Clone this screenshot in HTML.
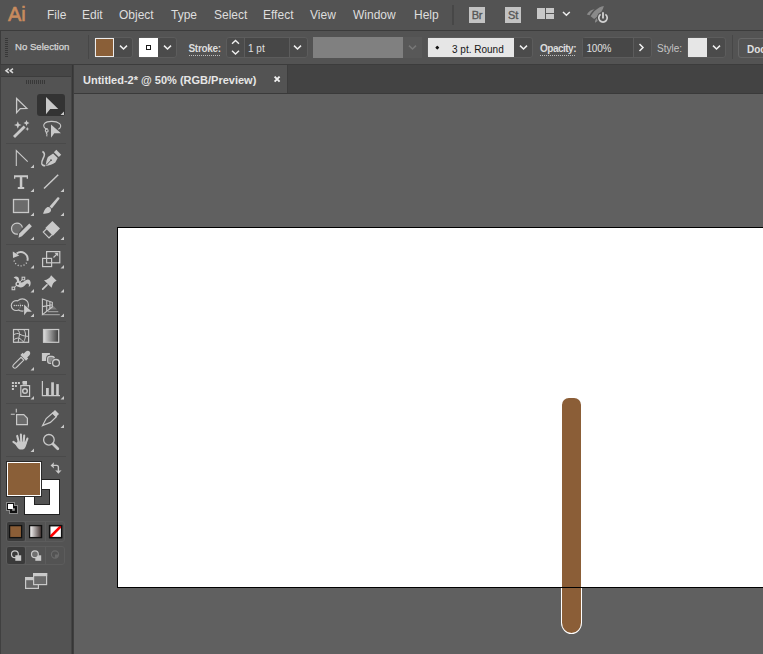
<!DOCTYPE html>
<html><head><meta charset="utf-8">
<style>
*{margin:0;padding:0;box-sizing:border-box}
html,body{width:763px;height:654px;overflow:hidden;background:#535353;font-family:"Liberation Sans",sans-serif}
.a{position:absolute}
.mt{position:absolute;top:8px;font-size:12px;color:#dedede;line-height:14px;white-space:nowrap}
.ct{position:absolute;font-size:10px;color:#e0e0e0;line-height:13px;white-space:nowrap}
.b{font-weight:bold}
.bx{position:absolute;background:#4b4b4b;border:1px solid #5c5c5c;border-radius:3px}
svg{position:absolute;overflow:visible}
</style></head><body>
<!-- menu bar -->
<div class="a" style="left:0;top:0;width:763px;height:30px;background:#535353"></div>
<div class="a" style="left:8px;top:2px;font-size:20px;color:#c98b5e;line-height:24px;-webkit-text-stroke:0.6px #c98b5e;transform:scaleX(1);transform-origin:0 0">Ai</div>
<div class="mt" style="left:47px">File</div>
<div class="mt" style="left:82px">Edit</div>
<div class="mt" style="left:119px">Object</div>
<div class="mt" style="left:171px">Type</div>
<div class="mt" style="left:214px">Select</div>
<div class="mt" style="left:263px">Effect</div>
<div class="mt" style="left:310px">View</div>
<div class="mt" style="left:353px">Window</div>
<div class="mt" style="left:414px">Help</div>
<div class="a" style="left:452px;top:5px;width:2px;height:20px;background:#474747"></div>
<div class="a" style="left:469px;top:7px;width:16px;height:16px;background:#c3c3c3;color:#565656;font-size:11px;line-height:16px;text-align:center;-webkit-text-stroke:0.35px #565656;letter-spacing:-0.3px">Br</div>
<div class="a" style="left:505px;top:7px;width:16px;height:16px;background:#c3c3c3;color:#565656;font-size:11px;line-height:16px;text-align:center;-webkit-text-stroke:0.35px #565656;letter-spacing:-0.3px">St</div>

<svg style="left:530px;top:0" width="90" height="30" viewBox="530 0 90 30">
<rect x="537" y="8" width="8" height="11" fill="#c8c8c8"/>
<rect x="546" y="8" width="8" height="5" fill="#c8c8c8"/>
<rect x="546" y="14" width="8" height="5" fill="#c8c8c8"/>
<path d="M563 12 L566.4 15.3 L569.8 12" fill="none" stroke="#ececec" stroke-width="1.5"/>
<path d="M603.8 5.9 C598 7 593.5 11 590.6 16.3 L594.1 18.9 C599 15.5 602.6 11 603.8 5.9Z" fill="#8a8a8a"/>
<path d="M586.8 14.6 C588.5 11.5 591.5 9.5 594.6 9.3 C592.5 11 590.8 13 589.6 15.2Z" fill="#8a8a8a"/>
<path d="M595 22.7 C594.8 21 595.5 19 597 18 L598.4 20.6Z" fill="#8a8a8a"/>
<circle cx="603" cy="17.9" r="6.1" fill="#535353"/>
<path d="M600.6 14.4 A4.2 4.2 0 1 0 605.4 14.4" fill="none" stroke="#d2d2d2" stroke-width="1.7"/>
<path d="M603 12 V18.6" stroke="#535353" stroke-width="3.4"/><path d="M603 12.2 V18.4" stroke="#d2d2d2" stroke-width="1.8"/>
</svg>

<!-- control bar -->
<div class="a" style="left:0;top:30px;width:763px;height:35px;background:#3c3c3c"></div>
<div class="a" style="left:1px;top:31px;width:762px;height:33px;background:#535353"></div>

<!-- grip -->
<div class="a" style="left:5px;top:38px;width:3px;height:19px;background:repeating-linear-gradient(#383838 0 1px,transparent 1px 2px)"></div>
<div class="ct" style="left:15px;top:40px;font-size:9.6px;color:#d6d6d6;letter-spacing:0px;-webkit-text-stroke:0.25px #d6d6d6">No Selection</div>
<div class="a" style="left:88px;top:35px;width:1px;height:24px;background:#474747"></div>
<!-- fill -->
<div class="bx" style="left:94px;top:37px;width:39px;height:21px"></div>
<div class="a" style="left:95px;top:38px;width:19px;height:19px;background:#ececec"></div>
<div class="a" style="left:96px;top:39px;width:17px;height:17px;background:#8a5f38"></div>
<svg style="left:119px;top:45px" width="10" height="7"><path d="M1 0.6 L4.5 4 L8 0.6" fill="none" stroke="#f0f0f0" stroke-width="1.5"/></svg>
<!-- stroke -->
<div class="bx" style="left:138px;top:37px;width:39px;height:21px"></div>
<div class="a" style="left:139px;top:38px;width:19px;height:19px;background:#fff"></div>
<div class="a" style="left:146px;top:45px;width:5px;height:5px;border:1px solid #1a1a1a"></div>
<svg style="left:163px;top:45px" width="10" height="7"><path d="M1 0.6 L4.5 4 L8 0.6" fill="none" stroke="#f0f0f0" stroke-width="1.5"/></svg>
<div class="ct b" style="left:188.5px;top:42px;color:#dcdcdc;letter-spacing:-0.3px">Stroke:</div>
<div class="a" style="left:189px;top:55px;width:31px;height:1px;background:repeating-linear-gradient(90deg,#bdbdbd 0 1px,transparent 1px 2px)"></div>
<!-- spinner -->
<div class="bx" style="left:226px;top:37px;width:82px;height:21px"></div>
<div class="a" style="left:244px;top:38px;width:1px;height:19px;background:#5c5c5c"></div>
<div class="a" style="left:245px;top:38px;width:44px;height:19px;background:#474747"></div>
<div class="a" style="left:289px;top:38px;width:1px;height:19px;background:#5c5c5c"></div>
<svg style="left:230px;top:39px" width="12" height="18"><path d="M2 4.8 L5.5 1.5 L9 4.8 M2 11.8 L5.5 15.1 L9 11.8" fill="none" stroke="#f0f0f0" stroke-width="1.4"/></svg>
<div class="ct" style="left:248px;top:42px">1 pt</div>
<svg style="left:293px;top:45px" width="10" height="7"><path d="M1 0.6 L4.5 4 L8 0.6" fill="none" stroke="#f0f0f0" stroke-width="1.5"/></svg>
<!-- profile -->
<div class="a" style="left:313px;top:37px;width:90px;height:21px;background:#808080"></div>
<div class="a" style="left:403px;top:37px;width:19px;height:21px;background:#585858"></div>
<svg style="left:408px;top:45px" width="10" height="7"><path d="M1 0.6 L4.5 4 L8 0.6" fill="none" stroke="#777" stroke-width="1.5"/></svg>
<!-- brush -->
<div class="bx" style="left:427px;top:37px;width:106px;height:21px"></div>
<div class="a" style="left:428px;top:38px;width:86px;height:19px;background:#e6e6e6"></div>
<div class="a" style="left:436px;top:46.3px;width:2.6px;height:2.6px;background:#111;border-radius:0.6px;transform:rotate(45deg)"></div>
<div class="ct" style="left:452px;top:43px;color:#151515">3 pt. Round</div>
<svg style="left:519px;top:45px" width="10" height="7"><path d="M1 0.6 L4.5 4 L8 0.6" fill="none" stroke="#f0f0f0" stroke-width="1.5"/></svg>
<div class="ct b" style="left:540px;top:42px;color:#dcdcdc;letter-spacing:-0.5px">Opacity:</div>
<div class="a" style="left:540px;top:55px;width:36px;height:1px;background:repeating-linear-gradient(90deg,#bdbdbd 0 1px,transparent 1px 2px)"></div>
<!-- opacity -->
<div class="bx" style="left:582px;top:37px;width:70px;height:21px"></div>
<div class="a" style="left:583px;top:38px;width:50px;height:19px;background:#474747"></div>
<div class="a" style="left:633px;top:38px;width:1px;height:19px;background:#5c5c5c"></div>
<div class="ct" style="left:586.5px;top:42px;letter-spacing:-0.2px">100%</div>
<svg style="left:638px;top:43px" width="8" height="10"><path d="M1.5 1 L5 4.5 L1.5 8" fill="none" stroke="#f0f0f0" stroke-width="1.5"/></svg>
<div class="ct" style="left:657px;top:42px;color:#c4c4c4">Style:</div>
<div class="bx" style="left:687px;top:37px;width:39px;height:21px"></div>
<div class="a" style="left:688px;top:38px;width:19px;height:19px;background:#e6e6e6"></div>
<svg style="left:712px;top:45px" width="10" height="7"><path d="M1 0.6 L4.5 4 L8 0.6" fill="none" stroke="#f0f0f0" stroke-width="1.5"/></svg>
<div class="a" style="left:732px;top:35px;width:1px;height:24px;background:#474747"></div>
<div class="bx" style="left:738px;top:38px;width:40px;height:20px;background:transparent;border-color:#666;border-radius:3px"></div>
<div class="ct b" style="left:747px;top:43px">Doc</div>

<!-- tab bar -->
<div class="a" style="left:0;top:65px;width:763px;height:29px;background:#434343"></div>
<div class="a" style="left:74px;top:65px;width:213px;height:28px;background:#535353"></div>
<div class="a" style="left:287px;top:65px;width:1px;height:28px;background:#3d3d3d"></div>
<div class="a" style="left:0;top:93px;width:763px;height:1px;background:#3a3a3a"></div>
<div class="ct b" style="left:83px;top:74px;font-size:11px;color:#e6e6e6">Untitled-2* @ 50% (RGB/Preview)</div>
<svg style="left:272px;top:74px" width="10" height="10"><path d="M2.6 2.6 L7.6 7.6 M7.6 2.6 L2.6 7.6" stroke="#f0f0f0" stroke-width="1.9"/></svg>

<!-- canvas -->
<div class="a" style="left:74px;top:94px;width:689px;height:560px;background:#606060"></div>
<div class="a" style="left:71px;top:65px;width:3px;height:589px;background:linear-gradient(90deg,#444 0 1px,#363636 1px 2px,#3f3f3f 2px)"></div>
<div class="a" style="left:117px;top:227px;width:660px;height:361px;background:#fff;border:1px solid #000"></div>
<div class="a" style="left:561px;top:397px;width:21px;height:237px;background:#fff;border-radius:8px 8px 10.5px 10.5px / 8px 8px 11.5px 11.5px"></div>
<div class="a" style="left:561.8px;top:397.8px;width:19.4px;height:235.4px;background:#8b5e37;border-radius:7px 7px 9.7px 9.7px / 7px 7px 10.7px 10.7px"></div>
<div class="a" style="left:117px;top:587px;width:646px;height:1px;background:#000"></div>

<!-- toolbar -->
<div class="a" style="left:0;top:65px;width:71px;height:11px;background:#464646"></div>
<div class="a" style="left:0;top:76px;width:71px;height:1px;background:#3c3c3c"></div>
<div class="a" style="left:0;top:77px;width:71px;height:577px;background:#535353"></div>
<div class="a" style="left:0;top:65px;width:1px;height:589px;background:#404040"></div>

<svg style="left:0;top:0" width="72" height="654" viewBox="0 0 72 654">
<g fill="none" stroke="#474747" stroke-width="1">
<!-- header chevrons -->
</g>
<path d="M8.8 68.6 L6 70.7 L8.8 72.8 M13 68.6 L10.2 70.7 L13 72.8" fill="none" stroke="#d8d8d8" stroke-width="1.5"/>
<!-- grip -->
<g fill="#383838"><rect x="26" y="80" width="1" height="4"/><rect x="28" y="80" width="1" height="4"/><rect x="30" y="80" width="1" height="4"/><rect x="32" y="80" width="1" height="4"/><rect x="34" y="80" width="1" height="4"/><rect x="36" y="80" width="1" height="4"/><rect x="38" y="80" width="1" height="4"/><rect x="40" y="80" width="1" height="4"/><rect x="42" y="80" width="1" height="4"/><rect x="44" y="80" width="1" height="4"/></g>
<!-- separators -->
<g fill="#4a4a4a"><rect x="6" y="143" width="60" height="1"/><rect x="6" y="244" width="60" height="1"/><rect x="6" y="321" width="60" height="1"/><rect x="6" y="374" width="60" height="1"/><rect x="6" y="403" width="60" height="1"/><rect x="6" y="456" width="60" height="1"/></g>
<!-- selected bg -->
<rect x="37" y="94" width="28" height="22" rx="3" fill="#333"/>
<g fill="#c9c9c9">
<!-- small corner triangles -->
<path d="M64 111.5 L64 115 L60.5 115Z"/>
<path d="M34 164.5 L34 168 L30.5 168Z"/>
<path d="M34 188.5 L34 192 L30.5 192Z"/><path d="M64 188.5 L64 192 L60.5 192Z"/>
<path d="M34 212.5 L34 216 L30.5 216Z"/><path d="M64 212.5 L64 216 L60.5 216Z"/>
<path d="M34 236.5 L34 240 L30.5 240Z"/><path d="M64 236.5 L64 240 L60.5 240Z"/>
<path d="M34 265 L34 268.5 L30.5 268.5Z"/><path d="M64 265 L64 268.5 L60.5 268.5Z"/>
<path d="M34 289 L34 292.5 L30.5 292.5Z"/><path d="M64 289 L64 292.5 L60.5 292.5Z"/>
<path d="M34 313.5 L34 317 L30.5 317Z"/><path d="M64 313.5 L64 317 L60.5 317Z"/>
<path d="M34 367 L34 370.5 L30.5 370.5Z"/>
<path d="M34 396 L34 399.5 L30.5 399.5Z"/><path d="M64 396 L64 399.5 L60.5 399.5Z"/>
<path d="M64 424.5 L64 428 L60.5 428Z"/>
<path d="M34 448.5 L34 452 L30.5 452Z"/>
<!-- direct selection filled arrow -->
<path d="M46 97 L58.3 109 L50.2 109 L46 114.3Z"/>
</g>
<g fill="none" stroke="#c9c9c9" stroke-width="1.3" stroke-linejoin="miter">
<!-- selection outline arrow -->
<path d="M16.6 98.5 L26.8 108.3 L20.3 108.6 L16.6 112.6Z"/>
<!-- anchor point -->
<path d="M16.3 166 L16.3 150.6 L27.7 161.7" stroke-width="1.1"/>
<!-- line -->
<path d="M44 188.5 L58.2 174.7" stroke-width="1.5"/>
<!-- rect -->
<rect x="13.5" y="199.5" width="15" height="13" fill="#6b6b6b"/>
</g>
<g fill="#c9c9c9">
<!-- T -->
<path d="M14 175.3 H28 V178.8 H26.7 V177.2 H22.3 V187 H24.2 V189 H17.8 V187 H19.8 V177.2 H15.3 V178.8 H14Z"/>
</g>
</svg>

<svg style="left:0;top:0" width="72" height="654" viewBox="0 0 72 654">
<defs><linearGradient id="gr" x1="0" x2="1" y1="0" y2="0"><stop offset="0" stop-color="#e0e0e0"/><stop offset="1" stop-color="#3a3a3a"/></linearGradient>
<linearGradient id="gr2" x1="0" x2="1" y1="0" y2="0"><stop offset="0" stop-color="#ffffff"/><stop offset="1" stop-color="#111"/></linearGradient></defs>
<g fill="#c9c9c9">
<!-- magic wand stars -->
<path d="M17.8 121.3 L18.9 124 L21.6 125 L18.9 126 L17.8 128.7 L16.7 126 L14 125 L16.7 124Z"/>
<path d="M26.5 120 L27.4 122.1 L29.5 123 L27.4 123.9 L26.5 126 L25.6 123.9 L23.5 123 L25.6 122.1Z"/>
<path d="M27.3 127 L27.9 128.4 L29.3 129 L27.9 129.6 L27.3 131 L26.7 129.6 L25.3 129 L26.7 128.4Z"/>
<!-- lasso arrow -->

<!-- pen nib -->
<path d="M45.6 166 C46 163 46.6 159.6 47.9 157 L53.1 153.4 L57.7 158 L55.3 162.6 C52.6 164.4 49.4 165.6 45.6 166Z"/>
<path d="M53.9 152.2 L56.3 149.8 L61.2 154.7 L58.8 157.1Z"/>
<path d="M45.9 165.6 L50.8 160.5" stroke="#535353" stroke-width="1"/><circle cx="51" cy="160.2" r="0.9" fill="#535353"/>
<!-- paintbrush bristle -->
<path d="M43 213.8 C44 211.5 44.6 208.6 46.8 207.4 C49 206.4 51.4 208 51 210.6 C50.6 212.8 47.6 213.8 43 213.8Z"/><path d="M49.6 206.4 L57.4 197.6 C58.4 196.6 60 197.6 59.3 198.9 L51.8 208.4Z"/>
<!-- shaper pencil -->
<path d="M18.5 237.8 L19.3 233.6 L29.3 223.6 L31.9 226.2 L21.9 236.2Z"/>
<!-- eraser filled -->
<path d="M52.4 221 L60 228.6 L52.9 235.7 L45.3 228.1Z"/>
<!-- rotate arrowhead -->
<path d="M12.8 251.6 L13 258 L19.3 255.6Z"/>
<!-- scale arrowhead -->
<path d="M58.2 252.8 L58.2 256.6 L54.4 252.8Z"/>
<!-- puppet warp blob -->
<path d="M13.6 277.8 C15.6 275.4 18.8 276.2 19 279.2 C19.2 281 20 282.6 22 282.4 C24.4 282.2 25.6 279.4 28 279.6 C30.4 279.8 31.2 282.6 30.4 285 C30 286.2 29.2 286.8 28.6 287 C29.2 285.4 29.2 283.6 27.6 283.4 C26 283.2 25 285.4 23.6 286.4 C21.8 287.8 19 287.6 17.8 286.6 C16.6 285.6 16.8 283.6 17 282 C17.2 280.2 16.6 278.6 13.6 277.8Z"/>
<!-- pin -->
<path d="M51.1 275.2 L56.6 280.7 Q52.4 282.4 51.6 287.8 L44 280.3 Q49.4 279.4 51.1 275.2Z"/>
<path d="M42.7 289.1 L47 284.8" stroke="#c9c9c9" stroke-width="1.7" stroke-linecap="round"/>
<!-- shape builder arrow -->


<!-- graph bars -->
<rect x="46" y="388" width="2.8" height="7.5"/><rect x="51.2" y="382.3" width="2.7" height="13.2"/><rect x="56.2" y="384.1" width="2.6" height="11.4"/>
<!-- symbol sprayer dots -->
<rect x="11.9" y="382" width="2" height="2"/><rect x="14.9" y="382" width="2" height="2"/><rect x="17.9" y="382" width="2" height="2"/><rect x="11.9" y="385" width="2" height="2"/><rect x="14.9" y="385" width="2" height="2"/><rect x="11.9" y="388" width="2" height="2"/>
<path d="M22.6 384.8 V382.6 L21.8 382.2 L23 381 H27 V384.8Z"/>
<!-- pencil -->
<path d="M42.6 425.6 L46.2 418.6 L52.6 413 L56.4 416.8 L50.4 422.4Z" fill="none" stroke="#c9c9c9" stroke-width="1.2"/>
<path d="M52 413 L55 410 L59 414 L56 417Z"/>
<!-- hand -->
<path d="M17.4 441.6 L26.6 441.8 C26.6 445.2 25.4 449.4 22.6 449.4 L19.8 449.4 C18 449.4 16.6 446.4 15.4 444.6Z"/>
<g stroke="#c9c9c9" stroke-width="2.1" stroke-linecap="round"><path d="M13.4 441.9 L18.4 445.4 M17.2 435.9 L18.9 442.5 M20.9 434.6 L21.2 441.5 M24.2 435.6 L23.7 442 M27.4 438.6 L25.4 444"/></g>
</g>
<g fill="none" stroke="#c9c9c9" stroke-width="1.2">
<!-- magic wand bar -->
<path d="M14 137 L24.6 126.4" stroke-width="2.8"/>
<!-- lasso loop -->
<path d="M48.5 130.2 C43.8 128.8 42.6 125.6 44.6 123.4 C47.4 120.6 56 120.8 59.6 123.6 C61.6 125.4 60.8 128 58.3 129.2 M47.6 128.6 C45.6 128.2 44.6 130.8 46 131.8 C47.4 132.8 48.8 131.2 47.8 130 M45.9 132.2 C46.9 133.4 47.6 134.9 46.7 136.4" stroke-width="1.1"/>
</g><path d="M51 124.5 L61 133.3 L54.3 133.3 L51 137.8Z" fill="#c9c9c9" stroke="#535353" stroke-width="1.2" paint-order="stroke"/><g fill="none" stroke="#c9c9c9" stroke-width="1.2">
<!-- pen stem -->
<path d="M42.4 151.5 C44.2 152.5 45 154 44 156.5 C43 159 41.2 161.5 41.8 163.8 C42.2 165.2 43.6 165.8 45.2 165.8" stroke-width="1.5"/>
<!-- paintbrush handle -->

<!-- shaper circle -->
<path d="M17.9 234.1 C14 234.6 11.5 231.8 11.5 228.6 C11.5 225.5 14 223.1 17 223.1 C19.8 223.1 22 225.2 22.4 227.5" fill="#6b6b6b"/>
<!-- eraser outline -->
<path d="M47.3 228.1 L43.3 232.1 L49 237.8 L53 233.8" />
<!-- rotate -->
<path d="M16.6 253.6 A6.8 6.8 0 0 1 27.37 260.76" stroke-width="1.9"/>
<path d="M26.6 262.6 A6.8 6.8 0 0 1 14.1 260.5" stroke-width="1.4" stroke-dasharray="1.1 1.9"/>
<!-- scale -->
<rect x="46.6" y="251.6" width="13.2" height="11.2"/>
<rect x="42.6" y="258.4" width="9" height="8.2"/>
<path d="M53.5 257.5 L57.6 253.4"/>
<!-- puppet pins -->
<path d="M13.4 288.4 L23.4 278.5" stroke-width="1"/>
<rect x="12.1" y="287.1" width="2.6" height="2.6" fill="#535353" stroke-width="1.1"/><circle cx="17.9" cy="283.9" r="1.8" fill="#535353" stroke-width="1.4"/><rect x="22.1" y="277.2" width="2.6" height="2.6" fill="#535353" stroke-width="1.1"/>
<!-- shape builder circles -->
<circle cx="16.2" cy="305.6" r="4.3" stroke-width="2.4"/>
<circle cx="22.3" cy="305" r="5.6" stroke-width="2.4"/>
<circle cx="16.2" cy="305.6" r="4.3" fill="#535353" stroke="none"/>
<circle cx="22.3" cy="305" r="5.6" fill="#535353" stroke="none"/>
<path d="M19.5 302.6 A4.3 4.3 0 0 1 19.6 308.4" stroke="#7a7a7a" stroke-width="0.9"/>
<g fill="#d0d0d0" stroke="none"><circle cx="14.3" cy="305.5" r="0.65"/><circle cx="16.3" cy="305.5" r="0.65"/><circle cx="18.3" cy="305.5" r="0.65"/><circle cx="20.4" cy="305.5" r="0.65"/><circle cx="22.5" cy="305.5" r="0.65"/></g>
</g><path d="M24.1 304.4 L31.9 311.8 L27 311.8 L24.1 315.2Z" fill="#c9c9c9" stroke="#535353" stroke-width="1.2" paint-order="stroke"/><g fill="none" stroke="#c9c9c9" stroke-width="1.2">
<!-- perspective grid -->
<path d="M50 306.6 L53.5 306 L57 309.6 L47.6 309.6Z" fill="#7c7c7c" stroke="none"/>
<path d="M47.9 311.6 H58.3 M43 314.6 H59.8" stroke="#999" stroke-width="1.1"/>
<path d="M42.4 299.1 V314.7 L52.3 307 V302.3 Z M46.7 300.5 V311.3 M49.9 301.5 V308.9 M42.4 306.6 L52.3 304.8" stroke-width="1.1"/>
<!-- mesh -->
<rect x="13.5" y="329.5" width="15.1" height="12.8"/>
<path d="M17.3 329.6 C19.5 331.5 19.8 333 19.4 335 C19 337.5 18.3 340 18.2 342.2 M23.8 329.6 C25.8 332 26 336 25 338.5 C24.5 340 24 341.5 23.5 342.2 M13.6 334.8 C15.5 333.6 18 333 19.4 334 C21.5 335 23.5 336.3 28.5 336.4 M13.6 340 C15 338.6 17 338 18.6 338.2 C20.4 338.4 22.4 340.5 23.6 342.2" stroke-width="1"/>
<!-- gradient -->
<rect x="43.5" y="329.5" width="15.2" height="12.8" fill="url(#gr)"/>
<!-- eyedropper -->
<path d="M13.3 367.4 C12.5 366.6 12.7 365.6 13.4 364.9 L14.6 363.7 L21 357.3 L23.8 360.1 L17.4 366.5 L16.2 367.7 C15.4 368.4 14.2 368.3 13.3 367.4Z" stroke-width="1.1"/><path d="M15.6 364.8 L16.3 365.5 M17.2 363.2 L17.9 363.9 M18.8 361.6 L19.5 362.3 M20.4 360 L21.1 360.7" stroke="#535353" stroke-width="0.8"/>

<!-- symbol sprayer can -->
<rect x="20.8" y="385.6" width="8.8" height="10.8"/>
<circle cx="25" cy="391" r="2.3" stroke-width="1.5"/>
<!-- graph axes -->
<path d="M42.4 381 V395.7 H60"/>
<!-- artboard -->
<path d="M16.3 408.8 V412.6 M10.8 414.3 H14.8" stroke-width="1.1"/>
<path d="M16.6 414.7 H23.8 L27.4 418.3 V424.7 H16.6Z" fill="#6b6b6b"/>
<!-- zoom -->
<circle cx="48.9" cy="439.8" r="5.3" stroke-width="1.3"/>
<path d="M53 444 L57.8 448.8" stroke-width="2.8" stroke-linecap="round"/>
</g>
<g fill="#c9c9c9">
<!-- eyedropper bulb/collar -->
<path d="M20.4 355 L22.6 352.8 L23.6 353.8 L25.6 351.8 C26.8 350.6 28.8 350.6 29.6 351.6 C30.6 352.6 30.4 354.4 29.2 355.6 L27.2 357.6 L28.2 358.6 L26 360.8Z"/>

</g>

<!-- swatches -->
<rect x="41.9" y="353" width="8" height="8" fill="#c9c9c9"/>
<rect x="47.6" y="356.3" width="6.8" height="7.2" rx="2.4" fill="#535353" stroke="#535353" stroke-width="3"/>
<rect x="47.6" y="356.3" width="6.8" height="7.2" rx="2.4" fill="#8a8a8a" stroke="#c9c9c9" stroke-width="1.2"/>
<circle cx="56" cy="362.9" r="3.4" fill="#535353" stroke="#535353" stroke-width="3"/>
<circle cx="56" cy="362.9" r="3.4" fill="#535353" stroke="#c9c9c9" stroke-width="1.3"/>

<rect x="24.5" y="479.5" width="35" height="35" fill="#fff" stroke="#222" stroke-width="1"/>
<rect x="34.5" y="489.5" width="15" height="15" fill="#535353" stroke="#222" stroke-width="1"/>
<rect x="6.5" y="461.5" width="35" height="35" fill="#fff" stroke="#2a2a2a" stroke-width="1"/>
<rect x="8" y="463" width="32" height="32" fill="#8a5f38"/>
<!-- swap -->
<path d="M52.5 465.4 H56.6 C57.8 465.4 58.4 466 58.4 467.2 V471" fill="none" stroke="#c9c9c9" stroke-width="1.4"/>
<path d="M50.5 465.4 L54 462.2 L53.5 465.4 L54 468.6Z M58.4 473.8 L55.2 470.3 L58.4 470.8 L61.6 470.3Z" fill="#c9c9c9"/>
<!-- default -->
<rect x="9.5" y="505.5" width="8" height="8" fill="#8a8a8a" stroke="#8a8a8a" stroke-width="1"/>
<rect x="6.5" y="502.5" width="8" height="8" fill="#8a8a8a" stroke="#8a8a8a" stroke-width="1"/>
<rect x="10" y="506" width="7" height="7" fill="#111"/>
<rect x="7" y="503" width="7" height="7" fill="#111"/>
<rect x="12.2" y="508.2" width="2.6" height="2.6" fill="#9a9a9a"/>
<rect x="8" y="504" width="5" height="5" fill="#fff"/>
<!-- color mode group -->
<rect x="6.5" y="521.5" width="58" height="20" rx="2.5" fill="none" stroke="#5c5c5c"/>
<rect x="7" y="522" width="18" height="19" rx="2" fill="#3a3a3a"/>
<path d="M25.5 522 V541 M45.5 522 V541" stroke="#5c5c5c"/>
<rect x="9.6" y="525.6" width="12" height="12" fill="#8b5e37" stroke="#111" stroke-width="1.3"/>
<defs><linearGradient id="gr3" x1="0" x2="1"><stop offset="0" stop-color="#fff"/><stop offset="1" stop-color="#3a2c2a"/></linearGradient></defs>
<rect x="29.6" y="525.6" width="12" height="12" fill="url(#gr3)" stroke="#111" stroke-width="1.3"/>
<rect x="49.6" y="525.6" width="12" height="12" fill="#fff" stroke="#111" stroke-width="1.3"/>
<path d="M50.2 537 L61 526.2" stroke="#ff0000" stroke-width="2.6"/>
<rect x="49.6" y="525.6" width="12" height="12" fill="none" stroke="#111" stroke-width="1.3"/>
<!-- draw mode group -->
<rect x="6.5" y="546.5" width="58" height="18" rx="2.5" fill="none" stroke="#5c5c5c"/>
<rect x="7" y="547" width="18" height="17" rx="2" fill="#3a3a3a"/>
<path d="M25.5 547 V564 M45.5 547 V564" stroke="#5c5c5c"/>
<circle cx="14.9" cy="554.3" r="3.4" fill="none" stroke="#c9c9c9" stroke-width="1.2"/>
<rect x="15.3" y="555.3" width="5.9" height="5.5" fill="#c9c9c9"/>
<rect x="35.3" y="555.3" width="5.9" height="5.5" fill="#c9c9c9"/>
<circle cx="34.9" cy="554.3" r="3.4" fill="#707070" stroke="#c9c9c9" stroke-width="1.2"/>
<circle cx="55" cy="554.5" r="3.6" fill="none" stroke="#6a6a6a" stroke-width="1.1"/>
<path d="M55 554.5 H58.6 A3.6 3.6 0 0 1 55 558.1Z" fill="#6a6a6a"/>
<!-- screen mode -->
<rect x="25.6" y="577.6" width="12.8" height="10.8" fill="#666" stroke="#c9c9c9" stroke-width="1.2"/>
<rect x="25" y="577" width="14" height="3.2" fill="#c9c9c9"/>
<rect x="33.6" y="573.6" width="13" height="11" fill="#6b6b6b" stroke="#c9c9c9" stroke-width="1.2"/>
<rect x="33" y="573" width="14.2" height="3.2" fill="#c9c9c9"/>
</svg>

</body></html>
